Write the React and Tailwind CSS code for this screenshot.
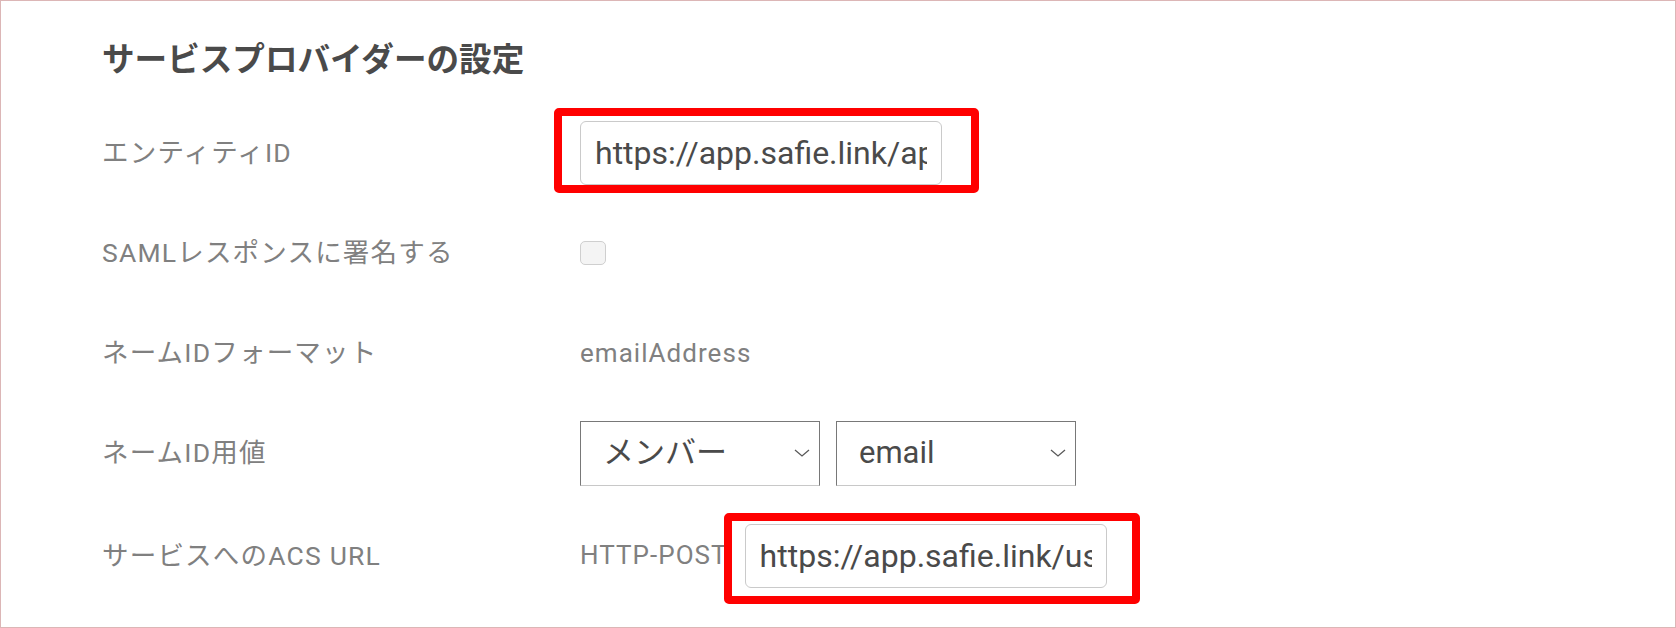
import React from 'react';

const font = { fontFamily: 'Roboto, "Noto Sans CJK JP", sans-serif' };

const Chevron = () => (
    <svg width="18" height="10" viewBox="0 0 18 10" fill="none">
        <polyline points="2,2 9,8 16,2" stroke="#5a5a5a" strokeWidth="1.3" />
    </svg>
);

const Row = ({ label, children, className = '' }) => (
    <div className={`flex items-center h-[100px] ${className}`}>
        <div className="w-[478px] shrink-0 text-[26.5px] tracking-[0.045em] text-[#808080]">{label}</div>
        <div className="flex items-center">{children}</div>
    </div>
);

const UrlField = ({ value, box }) => (
    <div className="relative">
        <input
            readOnly
            value={value}
            className="w-[362px] h-[64px] border border-[#cacaca] rounded-[6px] px-[14px] text-[32px] text-[#4a4a4a] bg-white outline-none"
        />
        {/* annotation */}
        <div className={`absolute border-[8px] border-[#ff0000] rounded-[5px] pointer-events-none ${box}`} />
    </div>
);

const Select = ({ value }) => (
    <div className="w-[240px] h-[65px] flex items-center justify-between pl-[22px] pr-[8px] border border-[#787878] border-b-[#c8c8c8] text-[31px] text-[#4a4a4a] bg-white">
        <span>{value}</span>
        <Chevron />
    </div>
);

export default function App() {
    return (
        <div style={font} className="w-[1676px] h-[628px] bg-white border border-[#dcb6b6] pl-[101px] overflow-hidden">
            <div className="h-[102px] pt-[16px] flex items-center">
                <h1 className="text-[32.6px] font-bold text-[#4a4a4a]">サービスプロバイダーの設定</h1>
            </div>

            <Row label="エンティティID">
                <UrlField value="https://app.safie.link/api/saml/metadata" box="-left-[26px] -top-[13px] w-[425px] h-[85px]" />
            </Row>

            <Row label="SAMLレスポンスに署名する">
                <div className="w-[26px] h-[24px] border border-[#cfcfcf] bg-[#f4f4f4] rounded-[5px]" />
            </Row>

            <Row label="ネームIDフォーマット">
                <span className="text-[26px] tracking-[0.04em] text-[#808080]">emailAddress</span>
            </Row>

            <Row label="ネームID用値">
                <div className="flex gap-[16px]">
                    <Select value="メンバー" />
                    <Select value="email" />
                </div>
            </Row>

            <Row label="サービスへのACS URL" className="pt-[5px]">
                <span className="text-[26px] tracking-[0.04em] text-[#808080] mr-[17px]">HTTP-POST</span>
                <UrlField value="https://app.safie.link/user/saml/acs" box="-left-[21px] -top-[11px] w-[416px] h-[91px]" />
            </Row>
        </div>
    );
}
